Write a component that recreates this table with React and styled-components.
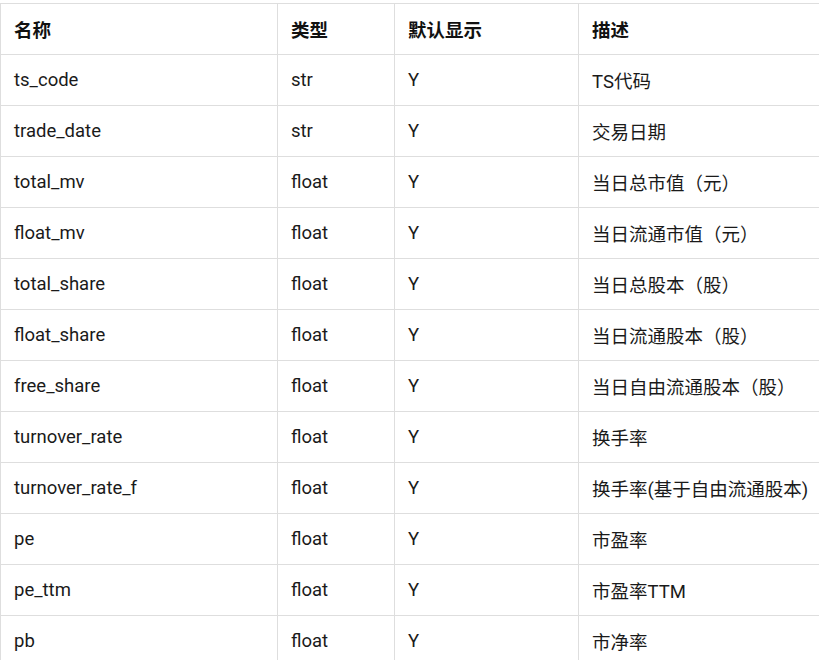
import React from "react";
import styled, { createGlobalStyle } from "styled-components";

const Global = createGlobalStyle`
  html, body { margin: 0; padding: 0; background: #fff; overflow: hidden; }
  body { font-family: Roboto, "Noto Sans CJK SC", sans-serif; color: #1a1a1a; }
`;

const Page = styled.div`
  padding-top: 3px;
  width: 900px;
`;

const Table = styled.table`
  border-collapse: collapse;
  width: 860px;
  table-layout: fixed;
  font-size: 18.5px;
`;

const Col = styled.col`
  width: ${(p) => p.$w}px;
`;

const Row = styled.tr`
  height: 51px;
`;

const Th = styled.th`
  border: 1px solid #dedede;
  padding: 0 13px 1px;
  text-align: left;
  font-weight: 700;
  color: #111;
  white-space: nowrap;
`;

const Td = styled.td`
  border: 1px solid #dedede;
  padding: 0 13px 1px;
  text-align: left;
  color: #1a1a1a;
  white-space: nowrap;
`;

const rows = [
  ["ts_code", "str", "Y", "TS代码"],
  ["trade_date", "str", "Y", "交易日期"],
  ["total_mv", "float", "Y", "当日总市值（元）"],
  ["float_mv", "float", "Y", "当日流通市值（元）"],
  ["total_share", "float", "Y", "当日总股本（股）"],
  ["float_share", "float", "Y", "当日流通股本（股）"],
  ["free_share", "float", "Y", "当日自由流通股本（股）"],
  ["turnover_rate", "float", "Y", "换手率"],
  ["turnover_rate_f", "float", "Y", "换手率(基于自由流通股本)"],
  ["pe", "float", "Y", "市盈率"],
  ["pe_ttm", "float", "Y", "市盈率TTM"],
  ["pb", "float", "Y", "市净率"],
  ["ps", "float", "Y", "市销率"],
];

export default function App() {
  return (
    <Page>
      <Global />
      <Table>
        <colgroup>
          <Col $w={277} />
          <Col $w={117} />
          <Col $w={184} />
          <Col $w={282} />
        </colgroup>
        <thead>
          <Row>
            <Th>名称</Th>
            <Th>类型</Th>
            <Th>默认显示</Th>
            <Th>描述</Th>
          </Row>
        </thead>
        <tbody>
          {rows.map((r) => (
            <Row key={r[0]}>
              {r.map((c, i) => (
                <Td key={i}>{c}</Td>
              ))}
            </Row>
          ))}
        </tbody>
      </Table>
    </Page>
  );
}
